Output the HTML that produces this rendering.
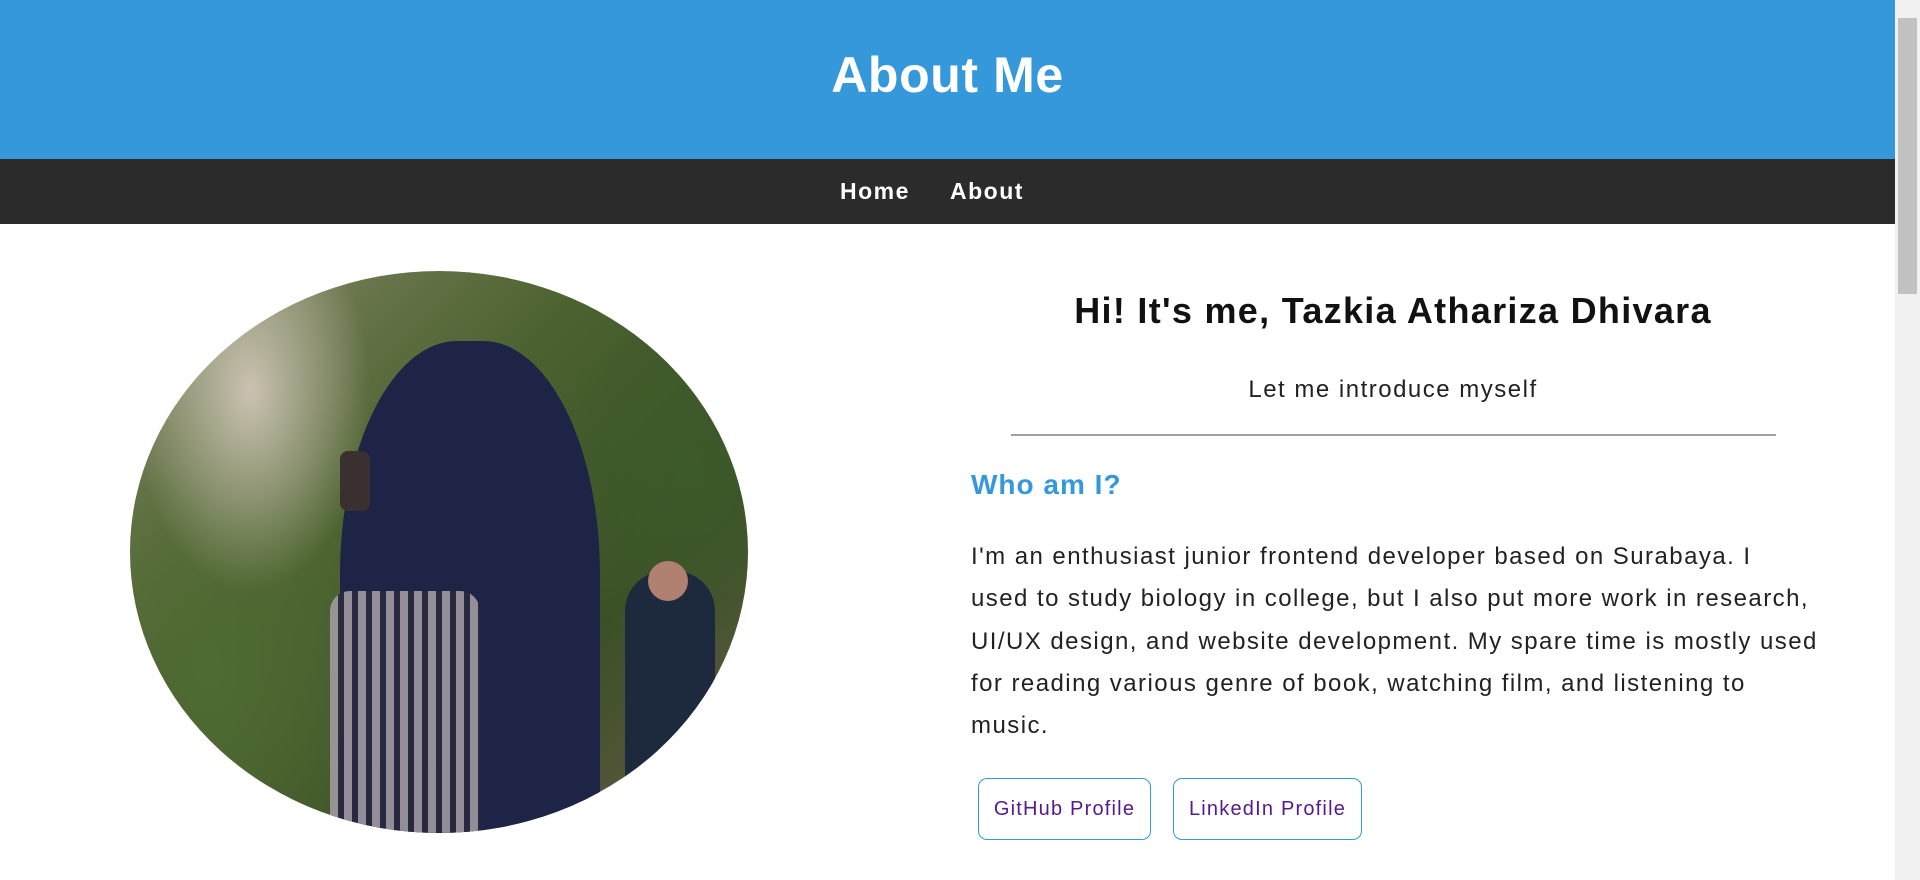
<!DOCTYPE html>
<html><head><meta charset="utf-8"><style>
*{margin:0;padding:0;box-sizing:border-box}
body{width:1920px;height:880px;overflow:hidden;background:#fff;font-family:"Liberation Sans",sans-serif;position:relative}
.hdr{position:absolute;left:0;top:0;width:1895px;height:159px;background:#3498db}
.hdr h1{position:absolute;width:100%;top:46px;text-align:center;color:#fff;font-size:50px;font-weight:bold;letter-spacing:0.6px}
.nav{position:absolute;left:0;top:159px;width:1895px;height:65px;background:#2b2b2b}
.nav a{position:absolute;top:19px;color:#fff;font-weight:bold;font-size:23px;text-decoration:none;letter-spacing:1.5px}
.sb{position:absolute;left:1895px;top:0;width:25px;height:880px;background:#f1f1f1}
.th{position:absolute;left:1898px;top:18px;width:19px;height:276px;background:#c1c1c1}
.photo{position:absolute;left:130px;top:271px;width:618px;height:562px;border-radius:50%;overflow:hidden;
background:radial-gradient(ellipse 120px 200px at 120px 120px,#c9c2b0,transparent),
radial-gradient(ellipse 200px 300px at 80px 400px,#4f6a32,transparent),
radial-gradient(ellipse 150px 200px at 560px 200px,#3d5a2a,transparent),
linear-gradient(135deg,#8a8a6a,#4c6230 40%,#3a5026 70%,#6b5a4a)}
.t{position:absolute;color:#111}
</style></head><body>
<div class="hdr"><h1>About Me</h1></div>
<div class="nav"><a style="left:840px">Home</a><a style="left:950px">About</a></div>
<div class="sb"></div><div class="th"></div>
<div class="photo">
<div style="position:absolute;left:210px;top:70px;width:260px;height:520px;background:#1e2445;border-radius:45% 45% 10% 10%"></div>
<div style="position:absolute;left:200px;top:320px;width:150px;height:260px;background:repeating-linear-gradient(90deg,#a09aa0 0 8px,#2a2a40 8px 14px),#888;border-radius:20px 20px 0 0;opacity:.9"></div>
<div style="position:absolute;left:495px;top:300px;width:90px;height:230px;background:#1d2a3e;border-radius:40px 40px 0 0"></div>
<div style="position:absolute;left:518px;top:290px;width:40px;height:40px;background:#b08070;border-radius:50%"></div>
<div style="position:absolute;left:210px;top:180px;width:30px;height:60px;background:#3a3030;border-radius:8px"></div>
</div>
<div class="t" style="left:900px;width:986px;top:290px;text-align:center;font-size:36px;font-weight:bold;letter-spacing:1.3px">Hi! It's me, Tazkia Athariza Dhivara</div>
<div class="t" style="left:900px;width:986px;top:376px;text-align:center;font-size:24px;color:#222;letter-spacing:1.5px">Let me introduce myself</div>
<div style="position:absolute;left:1011px;top:434px;width:765px;height:2px;background:#a0a0a0"></div>
<div class="t" style="left:971px;top:469px;font-size:28px;font-weight:bold;color:#3498db;letter-spacing:1px">Who am I?</div>
<div class="t" style="left:971px;top:536px;width:900px;font-size:24px;line-height:42.3px;color:#222;letter-spacing:1.45px">I'm an enthusiast junior frontend developer based on Surabaya. I<br>used to study biology in college, but I also put more work in research,<br>UI/UX design, and website development. My spare time is mostly used<br>for reading various genre of book, watching film, and listening to<br>music.</div>
<div style="position:absolute;left:978px;top:778px;width:173px;height:62px;border:1px solid #3498db;border-radius:9px;color:#551a8b;font-size:20px;text-align:center;line-height:60px;letter-spacing:1.2px">GitHub Profile</div>
<div style="position:absolute;left:1173px;top:778px;width:189px;height:62px;border:1px solid #3498db;border-radius:9px;color:#551a8b;font-size:20px;text-align:center;line-height:60px;letter-spacing:1.2px">LinkedIn Profile</div>
</body></html>
